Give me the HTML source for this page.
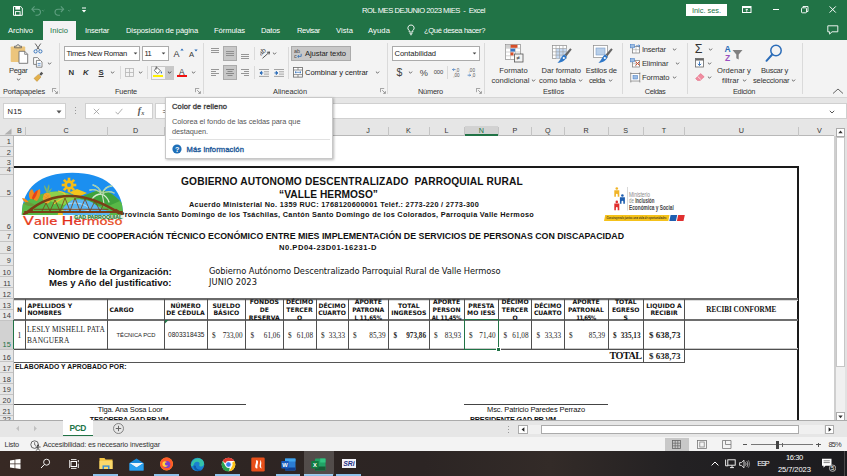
<!DOCTYPE html><html lang="es"><head><meta charset="utf-8"><title>ROL MES DEJUNIO 2023 MIES - Excel</title>
<style>html,body{margin:0;padding:0;width:847px;height:476px;overflow:hidden}body{position:relative;background:#fff;font-family:"Liberation Sans",sans-serif}#root{left:0;top:0;width:847px;height:476px;overflow:hidden;background:#fff}div,svg,span{position:absolute;box-sizing:border-box}span{white-space:pre;line-height:1;display:block}i{display:inline-block;width:0;height:0}</style></head><body><div id="root">
<div style="left:0px;top:0px;width:847px;height:39.5px;background:#217346;"></div>
<div style="left:0px;top:39.5px;width:847px;height:58.5px;background:#f3f3f3;"></div>
<div style="left:0px;top:97px;width:847px;height:1px;background:#d5d5d5;"></div>
<div style="left:0px;top:98px;width:847px;height:38px;background:#e6e6e6;"></div>
<svg style="left:13px;top:6px;" width="10" height="10" viewBox="0 0 10 10"><path d="M0.5 0.5h7.2l1.600 1.600v7.200h-8.800z" fill="none" stroke="#fff" stroke-width="1"/><rect x="2.300" y="0.8" width="4.800" height="2.800" fill="#fff"/><rect x="2.500" y="5.600" width="4.600" height="3.700" fill="none" stroke="#fff" stroke-width="0.900"/></svg>
<svg style="left:31px;top:5px;" width="14" height="11" viewBox="0 0 14 11"><path d="M1 4.2h5.5a3 3 0 0 1 0 6h-2" fill="none" stroke="#5f9f80" stroke-width="1.1"/><path d="M3.6 1.4L0.9 4.2l2.7 2.8" fill="none" stroke="#5f9f80" stroke-width="1.1"/><path d="M11 5l1.2 1.2L13.4 5" fill="none" stroke="#5f9f80" stroke-width="0.7"/></svg>
<svg style="left:54px;top:5px;" width="18" height="11" viewBox="0 0 18 11"><path d="M9.5 4.2h-5.5a3 3 0 0 0 0 6h2" fill="none" stroke="#5f9f80" stroke-width="1.1"/><path d="M6.9 1.4l2.7 2.8-2.7 2.8" fill="none" stroke="#5f9f80" stroke-width="1.1"/><path d="M14 5l1.2 1.2L16.4 5" fill="none" stroke="#5f9f80" stroke-width="0.7"/></svg>
<svg style="left:81px;top:7px;" width="6" height="7" viewBox="0 0 6 7"><rect x="1" y="0.5" width="4" height="1" fill="#fff"/><path d="M0.8 3h4.4L3 5.6z" fill="#fff"/></svg>
<div style="left:686px;top:4px;width:41px;height:12px;background:#fff;"></div>
<svg style="left:742px;top:6px;" width="10" height="8" viewBox="0 0 10 8"><rect x="0.5" y="0.5" width="8.5" height="6" fill="none" stroke="#fff" stroke-width="1"/><rect x="0.5" y="0.5" width="8.5" height="1.600" fill="#fff"/><path d="M4.750 3v2.800M3.500 4.200l1.250-1.250 1.250 1.250" fill="none" stroke="#fff" stroke-width="0.900"/></svg>
<div style="left:772.5px;top:8.8px;width:6.5px;height:1px;background:#fff;"></div>
<svg style="left:800.5px;top:6px;" width="8" height="8" viewBox="0 0 8 8"><rect x="0.5" y="1.800" width="5" height="5" rx="0.800" fill="none" stroke="#fff" stroke-width="0.900"/><path d="M2 1.800v-1.300h5v5h-1.300" fill="none" stroke="#fff" stroke-width="0.900"/></svg>
<svg style="left:829px;top:6px;" width="8" height="7" viewBox="0 0 8 7"><path d="M0.600 0.400l6.200 6.200M6.800 0.400l-6.200 6.200" stroke="#fff" stroke-width="1" fill="none"/></svg>
<div style="left:43px;top:21px;width:33px;height:19px;background:#f3f3f3;"></div>
<svg style="left:406.3px;top:24.3px;" width="10" height="13" viewBox="0 0 10 13"><path d="M5 1a3 3 0 0 0-1.800 5.500v1.500h3.600V6.500a3 3 0 0 0-1.800-5.500z" fill="none" stroke="#fff" stroke-width="0.9"/><path d="M3.500 9.400h3M4 10.700h2" stroke="#fff" stroke-width="0.8"/></svg>
<svg style="left:826.5px;top:24.5px;" width="12" height="10" viewBox="0 0 12 10"><path d="M0.800 0.800h10v6h-5.800l-2.400 2.300v-2.300h-1.800z" fill="none" stroke="#fff" stroke-width="0.900"/></svg>
<svg style="left:9px;top:43px;" width="20" height="22" viewBox="0 0 20 22"><rect x="1.700" y="3.500" width="14.500" height="15.500" rx="0.800" fill="#ecc57c"/><path d="M5.500 4.800v-1.600h2a1.500 1.500 0 0 1 3 0h2v1.600z" fill="none" stroke="#6a6a6a" stroke-width="0.900"/><path d="M10 8.300h5.700l3 3v9h-8.700z" fill="#fff" stroke="#707070" stroke-width="0.900"/><path d="M15.700 8.300v3h3" fill="none" stroke="#707070" stroke-width="0.800"/></svg>
<svg style="left:15.5px;top:78.0px;" width="5" height="3" viewBox="0 0 5 3"><path d="M0.900 0.600L2.500 2.200 4.100 0.600" fill="none" stroke="#666" stroke-width="1"/></svg>
<svg style="left:33px;top:43px;" width="10" height="11" viewBox="0 0 10 11"><path d="M2.2 0.5l4.2 6.2M7.8 0.5L3.6 6.7" stroke="#555" stroke-width="0.9" fill="none"/><circle cx="2.6" cy="8.4" r="1.6" fill="none" stroke="#2b6cb8" stroke-width="0.9"/><circle cx="7.4" cy="8.4" r="1.6" fill="none" stroke="#2b6cb8" stroke-width="0.9"/></svg>
<svg style="left:33px;top:57px;" width="10" height="11" viewBox="0 0 10 11"><path d="M0.6 0.6h4l1.6 1.6v5.2h-5.6z" fill="#fff" stroke="#6a6a6a" stroke-width="0.8"/><path d="M3.4 3.4h4l1.6 1.6v5.2h-5.6z" fill="#fff" stroke="#6a6a6a" stroke-width="0.8"/><path d="M4.6 6.4h3M4.6 8.2h3" stroke="#2b6cb8" stroke-width="0.7"/></svg>
<svg style="left:46.5px;top:61.5px;" width="5" height="3" viewBox="0 0 5 3"><path d="M0.900 0.600L2.500 2.200 4.100 0.600" fill="none" stroke="#666" stroke-width="1"/></svg>
<svg style="left:33px;top:71px;" width="11" height="11" viewBox="0 0 11 11"><path d="M6.2 3.2l2.2-2.4 1.8 1.6-2.2 2.4z" fill="#555"/><path d="M1 7.4l4.4-4 2.6 2.6-4 4.4z" fill="#e3b04b" stroke="#b8862b" stroke-width="0.5"/></svg>
<svg style="left:51.5px;top:88px;" width="6" height="6" viewBox="0 0 6 6"><path d="M0.4 4.2V0.4h3.8" fill="none" stroke="#777" stroke-width="0.7"/><path d="M2.2 2.2l3 3M5.4 3.2v2.2h-2.2" fill="none" stroke="#777" stroke-width="0.7"/></svg>
<div style="left:59px;top:43px;width:1px;height:51px;background:#dadada;"></div>
<div style="left:64px;top:46px;width:76px;height:15px;background:#fff;border:1px solid #ababab;"></div>
<svg style="left:132.5px;top:52.3px;" width="5" height="3" viewBox="0 0 5 3"><path d="M0.700 0.400h3.600L2.500 2.400z" fill="#444"/></svg>
<div style="left:142px;top:46px;width:26.5px;height:15px;background:#fff;border:1px solid #ababab;"></div>
<svg style="left:161.0px;top:52.3px;" width="5" height="3" viewBox="0 0 5 3"><path d="M0.700 0.400h3.600L2.500 2.400z" fill="#444"/></svg>
<svg style="left:179.5px;top:48px;" width="4" height="3" viewBox="0 0 4 3"><path d="M0.3 2.6L2 0.5l1.7 2.1z" fill="#2b6cb8"/></svg>
<svg style="left:194px;top:48.5px;" width="4" height="3" viewBox="0 0 4 3"><path d="M0.3 0.4L2 2.5l1.7-2.1z" fill="#2b6cb8"/></svg>
<svg style="left:109.5px;top:71.0px;" width="5" height="3" viewBox="0 0 5 3"><path d="M0.900 0.600L2.500 2.200 4.100 0.600" fill="none" stroke="#666" stroke-width="1"/></svg>
<div style="left:120px;top:66px;width:1px;height:13px;background:#dadada;"></div>
<svg style="left:125.2px;top:68px;" width="9" height="9" viewBox="0 0 9 9"><rect x="0.5" y="0.5" width="8" height="8" fill="none" stroke="#b5b5b5" stroke-width="0.8"/><path d="M4.5 0.5v8M0.5 4.5h8" stroke="#b5b5b5" stroke-width="0.8"/></svg>
<svg style="left:138.0px;top:71.0px;" width="5" height="3" viewBox="0 0 5 3"><path d="M0.900 0.600L2.500 2.200 4.100 0.600" fill="none" stroke="#666" stroke-width="1"/></svg>
<div style="left:147px;top:66px;width:1px;height:13px;background:#dadada;"></div>
<div style="left:151px;top:65.5px;width:23px;height:14.5px;background:#f3f3f3;border:1px solid #c6c6c6;"></div>
<div style="left:165px;top:65.5px;width:9px;height:14.5px;background:#c8c8c8;"></div>
<svg style="left:153px;top:66px;" width="10" height="9" viewBox="0 0 10 9"><path d="M3.6 1.2l4 3.6-3 2.8-3.2-3z" fill="#fff" stroke="#555" stroke-width="0.8"/><path d="M3.2 0.4v3" stroke="#555" stroke-width="0.8"/><path d="M8.4 5.2c0.8 1.2 0.9 2 0 2.2-0.9-0.2-0.8-1 0-2.2z" fill="#2b6cb8"/></svg>
<div style="left:153px;top:75px;width:10px;height:2px;background:#fff000;"></div>
<svg style="left:167.0px;top:71.0px;" width="5" height="3" viewBox="0 0 5 3"><path d="M0.900 0.600L2.500 2.200 4.100 0.600" fill="none" stroke="#444" stroke-width="1"/></svg>
<div style="left:177px;top:75px;width:10px;height:2px;background:#f01010;"></div>
<svg style="left:190.5px;top:71.0px;" width="5" height="3" viewBox="0 0 5 3"><path d="M0.900 0.600L2.500 2.200 4.100 0.600" fill="none" stroke="#666" stroke-width="1"/></svg>
<svg style="left:195px;top:88px;" width="6" height="6" viewBox="0 0 6 6"><path d="M0.4 4.2V0.4h3.8" fill="none" stroke="#777" stroke-width="0.7"/><path d="M2.2 2.2l3 3M5.4 3.2v2.2h-2.2" fill="none" stroke="#777" stroke-width="0.7"/></svg>
<div style="left:203px;top:43px;width:1px;height:51px;background:#dadada;"></div>
<div style="left:223px;top:46px;width:14px;height:15px;background:#c8c8c8;border:1px solid #ababab;"></div>
<div style="left:223px;top:65px;width:14px;height:15px;background:#c8c8c8;border:1px solid #ababab;"></div>
<svg style="left:211px;top:48px;" width="8" height="6" viewBox="0 0 8 6"><rect x="0" y="0" width="8" height="0.9" fill="#8c8c8c"/><rect x="0" y="2" width="8" height="0.9" fill="#8c8c8c"/><rect x="0" y="4" width="8" height="0.9" fill="#8c8c8c"/></svg>
<svg style="left:226px;top:50.5px;" width="8" height="6" viewBox="0 0 8 6"><rect x="0" y="0" width="8" height="0.9" fill="#8a8a8a"/><rect x="0" y="2" width="8" height="0.9" fill="#8a8a8a"/><rect x="0" y="4" width="8" height="0.9" fill="#8a8a8a"/></svg>
<svg style="left:241px;top:53.5px;" width="8" height="6" viewBox="0 0 8 6"><rect x="0" y="0" width="8" height="0.9" fill="#8c8c8c"/><rect x="0" y="2" width="8" height="0.9" fill="#8c8c8c"/><rect x="0" y="4" width="8" height="0.9" fill="#8c8c8c"/></svg>
<div style="left:254px;top:47px;width:1px;height:13px;background:#dadada;"></div>
<svg style="left:259.5px;top:47.5px;" width="11" height="11" viewBox="0 0 11 11"><text x="0" y="6" font-size="6.800" font-family="Liberation Sans" fill="#444" transform="rotate(-40 3 6)">ab</text><path d="M2.500 10.300l7-6.300M9.500 4l-2.600 0.300M9.500 4l-0.500 2.500" stroke="#444" stroke-width="0.900" fill="none"/></svg>
<svg style="left:271.5px;top:52.0px;" width="5" height="3" viewBox="0 0 5 3"><path d="M0.900 0.600L2.500 2.200 4.100 0.600" fill="none" stroke="#666" stroke-width="1"/></svg>
<div style="left:288px;top:47px;width:1px;height:32px;background:#dadada;"></div>
<div style="left:291px;top:46px;width:59.7px;height:15px;background:#c8c8c8;border:1px solid #ababab;"></div>
<svg style="left:294px;top:48px;" width="9" height="11" viewBox="0 0 9 11"><text x="0" y="4.8" font-size="5.4" font-family="Liberation Sans" fill="#444">ab</text><text x="0" y="10" font-size="5.4" font-family="Liberation Sans" fill="#444">c</text><path d="M4 8.4h3.2v-2.6" stroke="#2b6cb8" stroke-width="0.8" fill="none"/><path d="M5 7.2L3.6 8.4 5 9.6" stroke="#2b6cb8" stroke-width="0.8" fill="none"/></svg>
<svg style="left:211px;top:69px;" width="8" height="8" viewBox="0 0 8 8"><rect x="0" y="0" width="8" height="0.9" fill="#8c8c8c"/><rect x="0" y="2" width="5" height="0.9" fill="#8c8c8c"/><rect x="0" y="4" width="8" height="0.9" fill="#8c8c8c"/><rect x="0" y="6" width="5" height="0.9" fill="#8c8c8c"/></svg>
<svg style="left:226px;top:69px;" width="8" height="8" viewBox="0 0 8 8"><rect x="0.0" y="0" width="8" height="0.9" fill="#808080"/><rect x="1.5" y="2" width="5" height="0.9" fill="#808080"/><rect x="0.0" y="4" width="8" height="0.9" fill="#808080"/><rect x="1.5" y="6" width="5" height="0.9" fill="#808080"/></svg>
<svg style="left:241px;top:69px;" width="8" height="8" viewBox="0 0 8 8"><rect x="0" y="0" width="8" height="0.9" fill="#8c8c8c"/><rect x="3" y="2" width="5" height="0.9" fill="#8c8c8c"/><rect x="0" y="4" width="8" height="0.9" fill="#8c8c8c"/><rect x="3" y="6" width="5" height="0.9" fill="#8c8c8c"/></svg>
<div style="left:254px;top:66px;width:1px;height:13px;background:#dadada;"></div>
<svg style="left:259px;top:68.5px;" width="10" height="9" viewBox="0 0 10 9"><path d="M0 0.5h10M5 2.8h5M5 5.1h5M0 7.4h10" stroke="#9a9a9a" stroke-width="0.9"/><path d="M4.200 3.950H1M2.600 2.300L0.900 3.950l1.700 1.650z" stroke="#2b6cb8" stroke-width="0.900" fill="#2b6cb8"/></svg>
<svg style="left:274px;top:68.5px;" width="10" height="9" viewBox="0 0 10 9"><path d="M0 0.5h10M5 2.8h5M5 5.1h5M0 7.4h10" stroke="#9a9a9a" stroke-width="0.9"/><path d="M0.400 3.950h3M2.200 2.300L3.900 3.950 2.200 5.600z" stroke="#2b6cb8" stroke-width="0.900" fill="#2b6cb8"/></svg>
<svg style="left:293px;top:67px;" width="10" height="11" viewBox="0 0 10 11"><rect x="0.5" y="0.5" width="9" height="9.6" fill="#fff" stroke="#666" stroke-width="0.8"/><path d="M0.5 3h9M0.5 7.6h9M5 0.5v2.5M5 7.6v2.5" stroke="#666" stroke-width="0.7"/><path d="M2 5.3h6M3.2 4.2L2 5.3l1.2 1.1M6.8 4.2L8 5.3 6.800 6.400" stroke="#2b6cb8" stroke-width="0.7" fill="none"/></svg>
<svg style="left:374.5px;top:71.0px;" width="5" height="3" viewBox="0 0 5 3"><path d="M0.900 0.600L2.500 2.200 4.100 0.600" fill="none" stroke="#666" stroke-width="1"/></svg>
<svg style="left:380px;top:88px;" width="6" height="6" viewBox="0 0 6 6"><path d="M0.4 4.2V0.4h3.8" fill="none" stroke="#777" stroke-width="0.7"/><path d="M2.2 2.2l3 3M5.4 3.2v2.2h-2.2" fill="none" stroke="#777" stroke-width="0.7"/></svg>
<div style="left:387px;top:43px;width:1px;height:51px;background:#dadada;"></div>
<div style="left:392px;top:46px;width:88px;height:15px;background:#fff;border:1px solid #ababab;"></div>
<svg style="left:471.5px;top:52.3px;" width="5" height="3" viewBox="0 0 5 3"><path d="M0.700 0.400h3.600L2.500 2.400z" fill="#444"/></svg>
<svg style="left:408.0px;top:71.0px;" width="5" height="3" viewBox="0 0 5 3"><path d="M0.900 0.600L2.500 2.200 4.100 0.600" fill="none" stroke="#666" stroke-width="1"/></svg>
<div style="left:447px;top:66px;width:1px;height:13px;background:#dadada;"></div>
<svg style="left:452px;top:67px;" width="11" height="11" viewBox="0 0 11 11"><text x="3.4" y="4.6" font-size="4.6" font-family="Liberation Sans" fill="#555">,0</text><text x="1.2" y="10" font-size="4.6" font-family="Liberation Sans" fill="#555">,00</text><path d="M3.6 2.6H0.6M1.8 1.4L0.6 2.6l1.2 1.200" stroke="#2b6cb8" stroke-width="0.7" fill="none"/></svg>
<svg style="left:467px;top:67px;" width="11" height="11" viewBox="0 0 11 11"><text x="1.6" y="4.6" font-size="4.6" font-family="Liberation Sans" fill="#555">,00</text><text x="4.6" y="10" font-size="4.6" font-family="Liberation Sans" fill="#555">,0</text><path d="M0.6 8.2h3M2.4 7l1.200 1.200-1.200 1.200" stroke="#2b6cb8" stroke-width="0.7" fill="none"/></svg>
<svg style="left:476px;top:88px;" width="6" height="6" viewBox="0 0 6 6"><path d="M0.4 4.2V0.4h3.8" fill="none" stroke="#777" stroke-width="0.7"/><path d="M2.2 2.2l3 3M5.4 3.2v2.2h-2.2" fill="none" stroke="#777" stroke-width="0.7"/></svg>
<div style="left:484px;top:43px;width:1px;height:51px;background:#dadada;"></div>
<svg style="left:505px;top:44px;" width="19" height="19" viewBox="0 0 19 19"><rect x="0.5" y="0.5" width="15" height="15" fill="#fff" stroke="#8a8a8a" stroke-width="0.7"/><path d="M5.5 0.5v15M10.5 0.5v15M0.5 4.2h15M0.5 8h15M0.5 11.800h15" stroke="#b5b5b5" stroke-width="0.6"/><rect x="5.5" y="0.8" width="7" height="3" fill="#d64f2a"/><rect x="5.5" y="4.600" width="4.500" height="3" fill="#3a76c4"/><rect x="5.5" y="8.4" width="3" height="3" fill="#d64f2a"/><rect x="0.8" y="0.8" width="4.400" height="3.100" fill="#d0d0d0"/><rect x="9.500" y="10" width="8.500" height="8" fill="#f3f3f3" stroke="#555" stroke-width="0.8"/><text x="11.400" y="16.400" font-size="6.500" font-family="Liberation Sans" fill="#333">≠</text></svg>
<svg style="left:530.5px;top:79.0px;" width="5" height="3" viewBox="0 0 5 3"><path d="M0.900 0.600L2.500 2.200 4.100 0.600" fill="none" stroke="#666" stroke-width="1"/></svg>
<svg style="left:552px;top:45px;" width="20" height="19" viewBox="0 0 20 19"><rect x="0.5" y="0.5" width="14" height="13" fill="#fff" stroke="#8a8a8a" stroke-width="0.7"/><rect x="4" y="3.500" width="10.500" height="10" fill="#c5d9f1"/><path d="M4 0.5v13M7.500 0.5v13M11 0.5v13M0.5 3.500h14M0.5 6.800h14M0.5 10.100h14" stroke="#9a9a9a" stroke-width="0.6"/><path d="M18.200 3.200l1.500 1.300-5.200 6.800-2-1.600z" fill="#666"/><path d="M12.300 9.500l2.300 1.900c-0.600 3.600-4.600 6-9.200 6.400 2.800-1.800 3.600-6.400 6.900-8.300z" fill="#2f78c8"/><circle cx="11.800" cy="13" r="1.100" fill="#fff"/></svg>
<svg style="left:577.9px;top:79.0px;" width="5" height="3" viewBox="0 0 5 3"><path d="M0.900 0.600L2.500 2.200 4.100 0.600" fill="none" stroke="#666" stroke-width="1"/></svg>
<svg style="left:593px;top:45px;" width="20" height="19" viewBox="0 0 20 19"><rect x="0.5" y="0.5" width="14" height="12" fill="#fff" stroke="#8a8a8a" stroke-width="0.7"/><rect x="3" y="3" width="9" height="7" fill="#b8cfe9" stroke="#7b9cc5" stroke-width="0.600"/><path d="M18.200 3.200l1.500 1.300-5.200 6.800-2-1.600z" fill="#666"/><path d="M12.300 9.500l2.300 1.900c-0.600 3.600-4.600 6-9.200 6.400 2.800-1.800 3.600-6.400 6.900-8.300z" fill="#2f78c8"/><circle cx="11.800" cy="13" r="1.100" fill="#fff"/></svg>
<svg style="left:608.3px;top:79.0px;" width="5" height="3" viewBox="0 0 5 3"><path d="M0.900 0.600L2.500 2.200 4.100 0.600" fill="none" stroke="#666" stroke-width="1"/></svg>
<div style="left:622px;top:43px;width:1px;height:51px;background:#dadada;"></div>
<svg style="left:629.5px;top:43.5px;" width="11" height="11" viewBox="0 0 11 11"><rect x="2.500" y="2.500" width="7" height="6.500" fill="#fff" stroke="#777" stroke-width="0.7"/><path d="M2.500 5.700h7M6 2.500v6.500" stroke="#999" stroke-width="0.5"/><rect x="0.3" y="0.5" width="4.200" height="3.400" fill="#9dbde3" stroke="#3a76c4" stroke-width="0.500"/><path d="M6 1.800h4M8.500 0.600L10 1.800 8.500 3" stroke="#3a76c4" stroke-width="0.7" fill="none"/></svg>
<svg style="left:671.9px;top:47.5px;" width="5" height="3" viewBox="0 0 5 3"><path d="M0.900 0.600L2.500 2.200 4.100 0.600" fill="none" stroke="#666" stroke-width="1"/></svg>
<svg style="left:629.5px;top:57.5px;" width="11" height="11" viewBox="0 0 11 11"><rect x="2.500" y="2.500" width="7" height="6.500" fill="#fff" stroke="#777" stroke-width="0.7"/><path d="M2.500 5.700h7M6 2.500v6.500" stroke="#999" stroke-width="0.5"/><rect x="0.3" y="0.5" width="4.200" height="3.400" fill="#9dbde3" stroke="#3a76c4" stroke-width="0.500"/><path d="M5.500 3.500l4 4M9.500 3.500l-4 4" stroke="#d64f2a" stroke-width="1"/></svg>
<svg style="left:674.7px;top:61.8px;" width="5" height="3" viewBox="0 0 5 3"><path d="M0.900 0.600L2.500 2.200 4.100 0.600" fill="none" stroke="#666" stroke-width="1"/></svg>
<svg style="left:629.5px;top:71.5px;" width="11" height="11" viewBox="0 0 11 11"><rect x="0.8" y="1.500" width="9" height="7.500" fill="#fff" stroke="#777" stroke-width="0.7"/><rect x="3" y="3.500" width="4.600" height="3.500" fill="#9dbde3" stroke="#3a76c4" stroke-width="0.500"/><path d="M0.8 0.4v1.500M9.800 0.400v1.500M0.800 9v1.500M9.800 9v1.500" stroke="#777" stroke-width="0.7"/></svg>
<svg style="left:671.7px;top:76.0px;" width="5" height="3" viewBox="0 0 5 3"><path d="M0.900 0.600L2.500 2.200 4.100 0.600" fill="none" stroke="#666" stroke-width="1"/></svg>
<div style="left:687px;top:43px;width:1px;height:51px;background:#dadada;"></div>
<svg style="left:708.2px;top:47.5px;" width="5" height="3" viewBox="0 0 5 3"><path d="M0.900 0.600L2.500 2.200 4.100 0.600" fill="none" stroke="#666" stroke-width="1"/></svg>
<svg style="left:695px;top:58px;" width="9" height="10" viewBox="0 0 9 10"><rect x="0.5" y="0.5" width="8" height="8.500" fill="#fff" stroke="#666" stroke-width="0.8"/><rect x="0.5" y="0.5" width="8" height="2" fill="#666"/><path d="M4.500 3.500v4M2.800 5.800l1.700 1.700 1.700-1.700" stroke="#2b6cb8" stroke-width="0.9" fill="none"/></svg>
<svg style="left:707.0px;top:61.8px;" width="5" height="3" viewBox="0 0 5 3"><path d="M0.900 0.600L2.500 2.200 4.100 0.600" fill="none" stroke="#666" stroke-width="1"/></svg>
<svg style="left:695px;top:73px;" width="10" height="8" viewBox="0 0 10 8"><path d="M5.600 0.600l3.600 3.200-4 3.600H2.400L0.600 5.600z" fill="#f08ca0" stroke="#e0607a" stroke-width="0.500"/><path d="M2.600 3.400l3.200 3" stroke="#fff" stroke-width="0.700"/></svg>
<svg style="left:707.0px;top:76.0px;" width="5" height="3" viewBox="0 0 5 3"><path d="M0.900 0.600L2.500 2.200 4.100 0.600" fill="none" stroke="#666" stroke-width="1"/></svg>
<svg style="left:723.8px;top:43.5px;" width="20" height="19" viewBox="0 0 20 19"><text x="0.500" y="7.500" font-size="8.500" font-weight="700" font-family="Liberation Sans" fill="#2b6cb8">A</text><text x="1" y="17" font-size="8.500" font-weight="700" font-family="Liberation Sans" fill="#9a4fc0">Z</text><path d="M8.500 6h10l-3.800 4.500v5l-2.400-1.300v-3.700z" fill="#808080"/></svg>
<svg style="left:742.0px;top:79.0px;" width="5" height="3" viewBox="0 0 5 3"><path d="M0.900 0.600L2.500 2.200 4.100 0.600" fill="none" stroke="#666" stroke-width="1"/></svg>
<svg style="left:764px;top:44px;" width="20" height="19" viewBox="0 0 20 19"><circle cx="12" cy="6.500" r="5.200" fill="none" stroke="#2b6cb8" stroke-width="1.500"/><path d="M8.200 10.500L2.500 16.800" stroke="#2b6cb8" stroke-width="2" stroke-linecap="round"/></svg>
<svg style="left:791.2px;top:79.0px;" width="5" height="3" viewBox="0 0 5 3"><path d="M0.900 0.600L2.500 2.200 4.100 0.600" fill="none" stroke="#666" stroke-width="1"/></svg>
<div style="left:802px;top:43px;width:1px;height:51px;background:#dadada;"></div>
<svg style="left:831.5px;top:88px;" width="12" height="7" viewBox="0 0 12 7"><path d="M1 5.500l5-4.500 5 4.500" stroke="#555" stroke-width="0.900" fill="none"/></svg>
<div style="left:3px;top:103px;width:63px;height:16px;background:#fff;border:1px solid #d0d0d0;"></div>
<svg style="left:56px;top:109.5px;" width="6" height="4" viewBox="0 0 6 4"><path d="M0.500 0.500h5L3 3.500z" fill="#555"/></svg>
<div style="left:75px;top:107px;width:1px;height:1px;background:#999;"></div>
<div style="left:75px;top:110px;width:1px;height:1px;background:#999;"></div>
<div style="left:75px;top:113px;width:1px;height:1px;background:#999;"></div>
<div style="left:85px;top:103px;width:68px;height:16px;background:#fff;border:1px solid #d0d0d0;"></div>
<svg style="left:93px;top:108px;" width="7" height="7" viewBox="0 0 7 7"><path d="M0.800 0.800l5.400 5.400M6.200 0.800L0.800 6.200" stroke="#9a9a9a" stroke-width="0.800" fill="none"/></svg>
<svg style="left:115px;top:108px;" width="8" height="7" viewBox="0 0 8 7"><path d="M0.600 3.800l2.200 2.400L7.400 0.800" stroke="#9a9a9a" stroke-width="0.800" fill="none"/></svg>
<div style="left:155px;top:103px;width:686px;height:16px;background:#fff;border:1px solid #d0d0d0;border-right:none;"></div>
<div style="left:833px;top:103px;width:14px;height:16px;background:#fff;border:1px solid #d0d0d0;border-left:none;"></div>
<svg style="left:829px;top:109.5px;" width="6" height="4" viewBox="0 0 6 4"><path d="M0.800 0.800L3 3l2.200-2.200" fill="none" stroke="#444" stroke-width="0.9"/></svg>
<div style="left:0px;top:126px;width:834px;height:10px;background:#e6e6e6;"></div>
<div style="left:0px;top:135px;width:834px;height:1px;background:#b8b8b8;"></div>
<div style="left:0px;top:136px;width:14px;height:284px;background:#e6e6e6;"></div>
<div style="left:14px;top:136px;width:820px;height:284px;background:#fff;"></div>
<div style="left:13px;top:136px;width:1px;height:284px;background:#b8b8b8;"></div>
<svg style="left:4px;top:128px;" width="8" height="7" viewBox="0 0 8 7"><path d="M7.500 0.500v6h-7z" fill="#b0b0b0"/></svg>
<div style="left:465.3px;top:126px;width:32.5px;height:10px;background:#d2d2d2;"></div>
<div style="left:465.3px;top:134.3px;width:32.5px;height:1.5px;background:#217346;"></div>
<div style="left:24.5px;top:127px;width:1px;height:9px;background:#c4c4c4;"></div>
<div style="left:106.5px;top:127px;width:1px;height:9px;background:#c4c4c4;"></div>
<div style="left:163.5px;top:127px;width:1px;height:9px;background:#c4c4c4;"></div>
<div style="left:387.5px;top:127px;width:1px;height:9px;background:#c4c4c4;"></div>
<div style="left:428.5px;top:127px;width:1px;height:9px;background:#c4c4c4;"></div>
<div style="left:463.5px;top:127px;width:1px;height:9px;background:#c4c4c4;"></div>
<div style="left:498.0px;top:127px;width:1px;height:9px;background:#c4c4c4;"></div>
<div style="left:531.0px;top:127px;width:1px;height:9px;background:#c4c4c4;"></div>
<div style="left:563.5px;top:127px;width:1px;height:9px;background:#c4c4c4;"></div>
<div style="left:607.5px;top:127px;width:1px;height:9px;background:#c4c4c4;"></div>
<div style="left:643.0px;top:127px;width:1px;height:9px;background:#c4c4c4;"></div>
<div style="left:684.0px;top:127px;width:1px;height:9px;background:#c4c4c4;"></div>
<div style="left:797.5px;top:127px;width:1px;height:9px;background:#c4c4c4;"></div>
<div style="left:840.3px;top:127px;width:1px;height:9px;background:#c4c4c4;"></div>
<div style="left:0px;top:320px;width:13px;height:29.2px;background:#d2d2d2;"></div>
<div style="left:12.8px;top:320px;width:1.4px;height:29.2px;background:#217346;"></div>
<div style="left:0px;top:145.5px;width:13px;height:1px;background:#c4c4c4;"></div>
<div style="left:0px;top:156.0px;width:13px;height:1px;background:#c4c4c4;"></div>
<div style="left:0px;top:166.5px;width:13px;height:1px;background:#c4c4c4;"></div>
<div style="left:0px;top:173.5px;width:13px;height:1px;background:#c4c4c4;"></div>
<div style="left:0px;top:196.0px;width:13px;height:1px;background:#c4c4c4;"></div>
<div style="left:0px;top:230.0px;width:13px;height:1px;background:#c4c4c4;"></div>
<div style="left:0px;top:240.7px;width:13px;height:1px;background:#c4c4c4;"></div>
<div style="left:0px;top:252.5px;width:13px;height:1px;background:#c4c4c4;"></div>
<div style="left:0px;top:264.5px;width:13px;height:1px;background:#c4c4c4;"></div>
<div style="left:0px;top:275.9px;width:13px;height:1px;background:#c4c4c4;"></div>
<div style="left:0px;top:287.1px;width:13px;height:1px;background:#c4c4c4;"></div>
<div style="left:0px;top:298.1px;width:13px;height:1px;background:#c4c4c4;"></div>
<div style="left:0px;top:309.3px;width:13px;height:1px;background:#c4c4c4;"></div>
<div style="left:0px;top:319.5px;width:13px;height:1px;background:#c4c4c4;"></div>
<div style="left:0px;top:348.7px;width:13px;height:1px;background:#c4c4c4;"></div>
<div style="left:0px;top:361.2px;width:13px;height:1px;background:#c4c4c4;"></div>
<div style="left:0px;top:372.1px;width:13px;height:1px;background:#c4c4c4;"></div>
<div style="left:0px;top:383.0px;width:13px;height:1px;background:#c4c4c4;"></div>
<div style="left:0px;top:393.6px;width:13px;height:1px;background:#c4c4c4;"></div>
<div style="left:0px;top:404.1px;width:13px;height:1px;background:#c4c4c4;"></div>
<div style="left:0px;top:415.0px;width:13px;height:1px;background:#c4c4c4;"></div>
<div style="left:14px;top:166.3px;width:784.5px;height:1.5px;background:#1a1a1a;"></div>
<div style="left:797px;top:166px;width:1.5px;height:254.3px;background:#1a1a1a;"></div>
<div style="left:14px;top:298px;width:784px;height:2px;background:#6a6a6a;"></div>
<div style="left:14px;top:300px;width:784px;height:1px;background:#dcdcdc;"></div>
<div style="left:14px;top:362px;width:630px;height:1px;background:#555;"></div>
<div style="left:14px;top:404px;width:231.5px;height:1px;background:#444;"></div>
<div style="left:464px;top:404px;width:144px;height:1px;background:#444;"></div>
<div style="left:14px;top:319px;width:784px;height:2px;background:#6e6e6e;"></div>
<div style="left:14px;top:349px;width:784px;height:1px;background:#505050;"></div>
<div style="left:14px;top:348px;width:784px;height:1px;background:#c8c8c8;"></div>
<div style="left:643px;top:362px;width:42px;height:1px;background:#505050;"></div>
<div style="left:25px;top:299px;width:1px;height:50px;background:#505050;"></div>
<div style="left:107px;top:299px;width:1px;height:50px;background:#505050;"></div>
<div style="left:164px;top:299px;width:1px;height:50px;background:#505050;"></div>
<div style="left:207px;top:299px;width:1px;height:50px;background:#505050;"></div>
<div style="left:245px;top:299px;width:1px;height:50px;background:#505050;"></div>
<div style="left:283px;top:299px;width:1px;height:50px;background:#505050;"></div>
<div style="left:316px;top:299px;width:1px;height:50px;background:#505050;"></div>
<div style="left:348px;top:299px;width:1px;height:50px;background:#505050;"></div>
<div style="left:388px;top:299px;width:1px;height:50px;background:#505050;"></div>
<div style="left:429px;top:299px;width:1px;height:50px;background:#505050;"></div>
<div style="left:464px;top:299px;width:1px;height:50px;background:#505050;"></div>
<div style="left:498px;top:299px;width:1px;height:50px;background:#505050;"></div>
<div style="left:531px;top:299px;width:1px;height:50px;background:#505050;"></div>
<div style="left:564px;top:299px;width:1px;height:50px;background:#505050;"></div>
<div style="left:608px;top:299px;width:1px;height:50px;background:#505050;"></div>
<div style="left:643px;top:299px;width:1px;height:63px;background:#505050;"></div>
<div style="left:684px;top:299px;width:1px;height:63px;background:#505050;"></div>
<svg style="left:164.5px;top:320px;" width="4" height="4" viewBox="0 0 4 4"><path d="M0 0h3.500L0 3.500z" fill="#217346"/></svg>
<div style="left:463.5px;top:319px;width:35.5px;height:30.5px;border:1.300px solid #217346;"></div>
<div style="left:496px;top:347px;width:4.5px;height:4.5px;background:#fff;"></div>
<div style="left:496.8px;top:347.8px;width:3.2px;height:3.2px;background:#217346;"></div>
<div style="left:834px;top:126px;width:13px;height:294.3px;background:#f0f0f0;"></div>
<div style="left:834px;top:126px;width:13px;height:10px;background:#e6e6e6;"></div>
<div style="left:834px;top:136px;width:2px;height:284.3px;background:#cfcfcf;"></div>
<div style="left:845px;top:136px;width:2px;height:284.3px;background:#e2e2e2;"></div>
<div style="left:836px;top:127.5px;width:9px;height:9px;background:#fff;border:1px solid #ababab;"></div>
<svg style="left:838px;top:130px;" width="5" height="4" viewBox="0 0 5 4"><path d="M0.300 3.300L2.500 0.500l2.200 2.800z" fill="#333"/></svg>
<div style="left:836px;top:411.5px;width:9px;height:9px;background:#fff;border:1px solid #ababab;"></div>
<svg style="left:838px;top:414.5px;" width="5" height="4" viewBox="0 0 5 4"><path d="M0.300 0.500L2.500 3.300l2.200-2.800z" fill="#333"/></svg>
<div style="left:836px;top:137px;width:9px;height:230px;background:#fff;border:1px solid #c6c6c6;"></div>
<div style="left:0px;top:420px;width:847px;height:17px;background:#e6e6e6;"></div>
<div style="left:0px;top:420px;width:847px;height:1px;background:#ababab;"></div>
<svg style="left:15px;top:425px;" width="5" height="7" viewBox="0 0 5 7"><path d="M4 0.800L1.200 3.500 4 6.200z" fill="#c0c0c0"/></svg>
<svg style="left:33px;top:425px;" width="5" height="7" viewBox="0 0 5 7"><path d="M1 0.800L3.800 3.500 1 6.200z" fill="#c0c0c0"/></svg>
<div style="left:62.5px;top:420px;width:30.5px;height:15.5px;background:#fff;"></div>
<div style="left:62.5px;top:434.5px;width:30.5px;height:1.6px;background:#217346;"></div>
<svg style="left:111.8px;top:422px;" width="13" height="13" viewBox="0 0 13 13"><circle cx="6.500" cy="6.500" r="5" fill="none" stroke="#777" stroke-width="0.900"/><path d="M6.500 3.800v5.400M3.800 6.500h5.400" stroke="#666" stroke-width="1"/></svg>
<div style="left:507.5px;top:425.5px;width:1px;height:1px;background:#999;"></div>
<div style="left:507.5px;top:428.5px;width:1px;height:1px;background:#999;"></div>
<div style="left:507.5px;top:431.5px;width:1px;height:1px;background:#999;"></div>
<div style="left:518px;top:424.5px;width:9.5px;height:9.5px;background:#fff;border:1px solid #ababab;"></div>
<svg style="left:520.5px;top:427px;" width="4" height="5" viewBox="0 0 4 5"><path d="M3.400 0.300L0.600 2.500l2.800 2.200z" fill="#222"/></svg>
<div style="left:527.5px;top:424.5px;width:13px;height:9.5px;background:#f0f0f0;"></div>
<div style="left:540.5px;top:424.5px;width:258px;height:9.5px;background:#fff;border:1px solid #ababab;"></div>
<div style="left:798.5px;top:424.5px;width:25px;height:9.5px;background:#f0f0f0;"></div>
<div style="left:825px;top:424.5px;width:9px;height:9.5px;background:#fff;border:1px solid #ababab;"></div>
<svg style="left:827.5px;top:427px;" width="4" height="5" viewBox="0 0 4 5"><path d="M0.600 0.300L3.400 2.500 0.600 4.700z" fill="#222"/></svg>
<div style="left:0px;top:437px;width:847px;height:14.5px;background:#f3f3f3;"></div>
<svg style="left:30px;top:439.5px;" width="12" height="11" viewBox="0 0 12 11"><circle cx="4.600" cy="4.600" r="3.800" fill="none" stroke="#444" stroke-width="0.800"/><path d="M4.600 2.200v2.600l1.600 0.800" stroke="#444" stroke-width="0.700" fill="none"/><circle cx="8" cy="5.400" r="0.900" fill="#333"/><path d="M5.600 7h5M8 7v1.600M8 8.400l-1.800 2.200M8 8.400l1.800 2.200" stroke="#333" stroke-width="0.800" fill="none"/></svg>
<div style="left:665px;top:438px;width:23.5px;height:13.5px;background:#c8c8c8;"></div>
<svg style="left:671.5px;top:440px;" width="9" height="9" viewBox="0 0 9 9"><rect x="0.500" y="0.500" width="8" height="8" fill="none" stroke="#666" stroke-width="0.800"/><path d="M3.200 0.500v8M5.800 0.500v8M0.500 3.200h8M0.500 5.800h8" stroke="#666" stroke-width="0.700"/></svg>
<svg style="left:697px;top:440px;" width="10" height="9" viewBox="0 0 10 9"><rect x="0.500" y="0.500" width="9" height="8" fill="none" stroke="#777" stroke-width="0.800"/><rect x="2.800" y="2" width="4.400" height="5" fill="none" stroke="#777" stroke-width="0.700"/></svg>
<svg style="left:721.5px;top:440px;" width="10" height="9" viewBox="0 0 10 9"><path d="M0.500 8.500v-8h8.500v8z" fill="none" stroke="#777" stroke-width="0.800"/><path d="M3.500 0.500v4h5.500" fill="none" stroke="#777" stroke-width="0.800"/></svg>
<div style="left:743px;top:444.3px;width:4px;height:1px;background:#555;"></div>
<div style="left:750.5px;top:444.3px;width:62px;height:1px;background:#777;"></div>
<div style="left:776px;top:441px;width:2.6px;height:7.5px;background:#444;"></div>
<div style="left:781.5px;top:443px;width:1px;height:3.5px;background:#666;"></div>
<div style="left:816px;top:444.3px;width:4.6px;height:1px;background:#555;"></div>
<div style="left:817.8px;top:442.5px;width:1px;height:4.6px;background:#555;"></div>
<div style="left:0px;top:451px;width:847px;height:25px;background:linear-gradient(90deg,#372924 0%,#2e2523 30%,#2c2524 50%,#332b28 65%,#232123 80%,#1c1c1f 100%);"></div>
<svg style="left:10px;top:459px;" width="11" height="10" viewBox="0 0 11 10"><path d="M0 1.400l4.600-0.700v3.900H0zM5.300 0.600L10.500 0v4.600H5.300zM0 5.300h4.600v3.900L0 8.500zM5.300 5.300h5.200V10l-5.200-0.700z" fill="#fff"/></svg>
<svg style="left:40px;top:458px;" width="11" height="11" viewBox="0 0 11 11"><circle cx="6.600" cy="4.200" r="3" fill="none" stroke="#fff" stroke-width="0.900"/><path d="M4.400 6.500L1 10" stroke="#fff" stroke-width="1"/></svg>
<svg style="left:69px;top:458.5px;" width="11" height="10" viewBox="0 0 11 10"><rect x="2" y="2.500" width="5.500" height="5" fill="none" stroke="#fff" stroke-width="1"/><path d="M0.300 1v8M9.300 1v2.200M9.300 4.600v4.400M2 0.600h5.500M2 9.400h5.500" stroke="#fff" stroke-width="0.900"/></svg>
<div style="left:93px;top:474.3px;width:25px;height:1.7px;background:#8ec1ea;"></div>
<div style="left:154px;top:474.3px;width:25px;height:1.7px;background:#8ec1ea;"></div>
<div style="left:215px;top:474.3px;width:25px;height:1.7px;background:#8ec1ea;"></div>
<div style="left:276px;top:474.3px;width:24px;height:1.7px;background:#8ec1ea;"></div>
<div style="left:304px;top:474.3px;width:29px;height:1.7px;background:#8ec1ea;"></div>
<div style="left:336px;top:474.3px;width:25px;height:1.7px;background:#8ec1ea;"></div>
<div style="left:304px;top:451px;width:29.5px;height:23.5px;background:rgba(255,255,255,0.18);"></div>
<svg style="left:99px;top:457px;" width="14" height="13" viewBox="0 0 14 13"><path d="M0.500 1h5l1 1.500h7v9.500h-13z" fill="#f6c544"/><rect x="0.500" y="3.800" width="13" height="8.200" fill="#fbd96b"/><rect x="3.500" y="8.400" width="7" height="3.600" fill="#3a8fd6"/><rect x="5" y="9.800" width="4" height="2.200" fill="#fbd96b"/></svg>
<svg style="left:129px;top:457.5px;" width="15" height="13" viewBox="0 0 15 13"><path d="M0.500 5L7.500 0.500 14.500 5v7.500h-14z" fill="#1a8ad8"/><path d="M0.500 5l7 4.500 7-4.500" fill="#fff" opacity="0.920"/><path d="M0.500 5.200l7 4.500 7-4.500v7.300h-14z" fill="#2aa0ee"/></svg>
<svg style="left:159px;top:456px;" width="15" height="15" viewBox="0 0 15 15"><circle cx="7.500" cy="8" r="6.500" fill="#ff9a1e"/><path d="M2 5c1-2.500 4-4.200 7-3.400 3 0.800 5 3.600 4.800 6.800-0.300 3.400-3.200 6-6.600 5.800-3.600-0.200-6.400-3.200-6.100-6.900z" fill="#ff5a2a"/><circle cx="7.800" cy="8.400" r="3.500" fill="#7a3fd0"/><path d="M4 6c1.200-1 3-0.800 4 0.200-1.400-0.200-2.200 0.600-2 1.800 0.200 1.400 1.800 2 3 1.300-0.800 1.800-3.200 2.200-4.600 1-1.200-1-1.400-3-0.400-4.300z" fill="#ffd23e"/></svg>
<svg style="left:190px;top:456.5px;" width="15" height="15" viewBox="0 0 15 15"><circle cx="7.500" cy="7.500" r="6.800" fill="#1b7fd0"/><path d="M1 9c0-4.500 3-7.800 7-7.800 3.400 0 6 2.400 6 5.400 0 1.800-1.200 3-2.800 3-1.200 0-2-0.600-2-1.400 0-0.600 0.400-0.800 0.400-1.500 0-1-1-1.900-2.400-1.900-2.200 0-3.800 2-3.800 4.400z" fill="#35c3a8"/><path d="M3.400 8.600c0 3 2.200 5.400 5 5.400 1.600 0 3-0.500 4-1.500-3.600 1.200-6.600-0.800-6.600-3.800z" fill="#0d5cab"/></svg>
<svg style="left:220.5px;top:456.5px;" width="15" height="15" viewBox="0 0 15 15"><circle cx="7.500" cy="7.500" r="6.800" fill="#fff"/><path d="M7.500 0.700a6.800 6.800 0 0 1 5.900 3.400H7.500a3.400 3.400 0 0 0-3.200 2.200L1.700 3.900A6.800 6.800 0 0 1 7.500 0.700z" fill="#e33b2e"/><path d="M13.400 4.100a6.800 6.800 0 0 1-5.200 10.200l2.900-5.100a3.400 3.400 0 0 0 0-3.400z" fill="#fbc116" transform="translate(0,0)"/><path d="M8.200 14.300A6.800 6.800 0 0 1 1.700 3.900l2.900 5.300a3.400 3.400 0 0 0 4.100 1.500z" fill="#2ba24c"/><circle cx="7.500" cy="7.500" r="2.700" fill="#3b7ded" stroke="#fff" stroke-width="0.700"/></svg>
<svg style="left:251px;top:456.5px;" width="14" height="15" viewBox="0 0 14 15"><rect x="0.300" y="0.500" width="13.400" height="14" rx="1.200" fill="#e8501a"/><path d="M5 3.500c1.600-0.600 2.400 0.600 2 2.400-0.400 1.800-1 3.400-0.400 5.400-1.800 0.400-2.600-0.800-2.400-2.600 0.200-1.600 1.200-3 0.800-5.200zM9 3c1.200 0.800 1.600 2.400 1.200 4.200-0.300 1.500-0.200 3 0.600 4.200-1.600 0-2.400-1.200-2.200-2.800 0.200-1.800 1-3.600 0.400-5.600z" fill="#fff"/></svg>
<svg style="left:281px;top:457.5px;" width="15" height="13" viewBox="0 0 15 13"><rect x="4" y="0.500" width="10.500" height="12" rx="0.800" fill="#2b7cd3"/><rect x="4" y="0.500" width="10.500" height="3" fill="#41a5ee"/><rect x="4" y="9.500" width="10.500" height="3" fill="#103f91"/><rect x="0.300" y="3" width="7.400" height="7.400" rx="0.600" fill="#185abd"/><text x="1.300" y="9" font-size="5.800" font-weight="700" font-family="Liberation Sans" fill="#fff">W</text></svg>
<svg style="left:311px;top:457.5px;" width="15" height="13" viewBox="0 0 15 13"><rect x="4" y="0.500" width="10.500" height="12" rx="0.800" fill="#21a366"/><rect x="9.200" y="0.500" width="5.300" height="4" fill="#33c481"/><rect x="4" y="8.500" width="10.500" height="4" fill="#185c37"/><rect x="0.300" y="3" width="7.400" height="7.400" rx="0.600" fill="#107c41"/><text x="2" y="9" font-size="5.800" font-weight="700" font-family="Liberation Sans" fill="#fff">X</text></svg>
<svg style="left:342px;top:458.5px;" width="14" height="10" viewBox="0 0 14 10"><rect x="0" y="0" width="14" height="9" fill="#f2f2f8"/><text x="1.200" y="7.200" font-size="6.800" font-weight="700" font-style="italic" font-family="Liberation Sans" fill="#1c2f86" textLength="11.500" lengthAdjust="spacingAndGlyphs">SRi</text></svg>
<svg style="left:710.5px;top:460.5px;" width="8" height="5" viewBox="0 0 8 5"><path d="M0.600 4.400L4 1l3.400 3.400" stroke="#fff" stroke-width="1" fill="none"/></svg>
<svg style="left:724.5px;top:458.5px;" width="11" height="10" viewBox="0 0 11 10"><rect x="2.800" y="0.800" width="7.400" height="5.400" fill="none" stroke="#fff" stroke-width="0.900"/><path d="M0.600 0.600v6.200h2.600M5 8.600h4M7 6.400v2.200" stroke="#fff" stroke-width="0.900" fill="none"/></svg>
<svg style="left:739px;top:458.5px;" width="11" height="10" viewBox="0 0 11 10"><path d="M0.600 3.600h1.800L5 1.200v7.600L2.400 6.400H0.600z" fill="none" stroke="#fff" stroke-width="0.800"/><path d="M6.400 3.400c0.800 0.900 0.800 2.300 0 3.200M7.800 2.200c1.400 1.600 1.400 4 0 5.600" stroke="#fff" stroke-width="0.700" fill="none"/><path d="M9.200 1.200c1.800 2.200 1.800 5.400 0 7.600" stroke="#bbb" stroke-width="0.600" fill="none"/></svg>
<div style="left:843.5px;top:451px;width:1px;height:25px;background:#4a4a4a;"></div>
<svg style="left:820.5px;top:457.5px;" width="15" height="15" viewBox="0 0 15 15"><path d="M1 0.800h9.500v7h-6l-2 2v-2H1z" fill="#fff"/><path d="M2.600 2.800h6.200M2.600 4.600h6.200" stroke="#333" stroke-width="0.600"/><circle cx="11.600" cy="10.200" r="3.200" fill="#2a2a2a" stroke="#ddd" stroke-width="0.700"/><text x="10.100" y="12.300" font-size="5.600" font-family="Liberation Sans" fill="#fff">5</text></svg>
<svg style="left:20px;top:170px;z-index:3;" width="106" height="60" viewBox="0 0 106 60"><defs><clipPath id="dome"><path d="M1.800 45C1.800 17.500 20.500 2.800 52.400 2.800S103 17.500 103 45z"/></clipPath><linearGradient id="vh" x1="0" y1="0" x2="1" y2="0"><stop offset="0" stop-color="#e8401c"/><stop offset="0.500" stop-color="#e02a1a"/><stop offset="1" stop-color="#e8501c"/></linearGradient></defs><g clip-path="url(#dome)"><rect x="0" y="0" width="106" height="46" fill="#1b8ff0"/><path d="M0 46V36C8 30 18 24 30 22c8-1.500 14 0 20 2l10 4c8-4 16-8 24-7 8 1 14 8 22 16v9z" fill="#58b947"/><path d="M30 22c8-1.500 14 0 20 2l8 3-14 8-22-6z" fill="#8fd04a"/><path d="M60 28c8-4 16-8 24-7 6 1 11 5 16 10l-14 6-22-4z" fill="#3fa23c"/><path d="M49 22.500l8-3.500 10 4-9 4z" fill="#f4c51e"/><path d="M38 21c6 1 9 3 6 6s-8 4-10 7" fill="none" stroke="#f0c630" stroke-width="1.200"/><path d="M52 30c10-2 18 0 24 5 4 3 10 6 16 6l-4 5H44c-4-4-2-9 8-16z" fill="#58b6f4"/><path d="M48 34c6-2 14-1 20 3M46 40c8-2 20-1 30 3" stroke="#c9e8fb" stroke-width="0.800" fill="none"/><path d="M44 40c-2 2-2 4 0 6h-6c-1-3 1-5 6-6z" fill="#f0c630"/></g><g transform="translate(49,15)"><rect x="-1.300" y="-7.300" width="2.600" height="4" fill="#f6bd16" transform="rotate(0)"/><rect x="-1.300" y="-7.300" width="2.600" height="4" fill="#f6bd16" transform="rotate(45)"/><rect x="-1.300" y="-7.300" width="2.600" height="4" fill="#f6bd16" transform="rotate(90)"/><rect x="-1.300" y="-7.300" width="2.600" height="4" fill="#f6bd16" transform="rotate(135)"/><rect x="-1.300" y="-7.300" width="2.600" height="4" fill="#f6bd16" transform="rotate(180)"/><rect x="-1.300" y="-7.300" width="2.600" height="4" fill="#f6bd16" transform="rotate(225)"/><rect x="-1.300" y="-7.300" width="2.600" height="4" fill="#f6bd16" transform="rotate(270)"/><rect x="-1.300" y="-7.300" width="2.600" height="4" fill="#f6bd16" transform="rotate(315)"/><circle r="4.700" fill="#f6bd16"/><circle r="2" fill="#2b8fe8"/></g><path d="M10 29c-2-4-1-8 2-10 2 3 3 6 2 10zM14 30c0-5 2-9 6-11 1 4 0 8-3 12zM8 31c-2-2-4-3-6-3 1 3 3 5 7 6z" fill="#f08a1c"/><path d="M12 28c1-4 3-7 6-8-1 4-2 7-5 10z" fill="#e8401c"/><path d="M6 32c3 0 6 1 9 3-4 2-8 1-11-1z" fill="#6a9a3a"/><ellipse cx="27" cy="28" rx="4" ry="5.500" fill="#f0a62a"/><path d="M23.500 26l7 5M23.500 30l6-5M25 23l5 6" stroke="#d8862a" stroke-width="0.500"/><path d="M27 23c-2-3-3-5-3-8 2 2 3 4 3 6 0-3 1-5 2-7 1 3 0 6-1 8 1-2 3-3 4-4-1 3-2 5-5 5z" fill="#7db56a"/><g stroke="#d7ecd0" stroke-width="1.300" fill="none" stroke-linecap="round"><path d="M82 24c-4-4-8-5-12-4M82 24c-2-5-5-8-9-9M82 24c2-5 6-8 10-8M82 24c4-3 8-3 12-1M82 24c-5 0-8 2-10 5M82 24c4 2 6 5 7 8"/><path d="M82 24c1 4 2 8 2 12" stroke="#c9e0c0" stroke-width="1.100"/></g><g stroke="#6fae5a" stroke-width="0.500" fill="none"><path d="M82 24c-4-4-8-5-12-4M82 24c-2-5-5-8-9-9M82 24c2-5 6-8 10-8M82 24c4-3 8-3 12-1"/></g><g fill="none" stroke="#7a3e16" stroke-linecap="round"><path d="M7 42.500C21 30 36 26 50 26s32 6 49 17" stroke-width="2.700"/><path d="M5 42h97" stroke-width="2"/><path d="M14 39.300h74" stroke-width="0.900"/><path d="M22 41l4-8 4 8 5-11 5 11 5-13 5 13 5-13 5 13 5-12 5 12 5-10 5 10 4-7" stroke-width="0.800"/><path d="M4 44l8-4M102 44l-6-4" stroke-width="2.200"/></g><rect x="53" y="45.200" width="50.500" height="4.200" fill="#e8f0dc"/><text x="54.300" y="48.900" font-size="4.500" font-weight="700" font-family="Liberation Sans, sans-serif" fill="#1d7a34" stroke="#1d7a34" stroke-width="0.150" textLength="48" lengthAdjust="spacingAndGlyphs">GAD PARROQUIAL</text><text x="3" y="54.800" font-size="10.200" font-family="DejaVu Sans, Liberation Sans, sans-serif" fill="url(#vh)" textLength="99.500" lengthAdjust="spacingAndGlyphs" stroke="url(#vh)" stroke-width="0.200"><tspan font-size="12.400">V</tspan>alle <tspan font-size="12.400">H</tspan>ermoso</text></svg>
<svg style="left:603px;top:185px;" width="84" height="38" viewBox="0 0 84 38"><g transform="translate(11,2.2)" fill="#f0b428"><circle cx="2.800" cy="1.300" r="1.300"/><path d="M0.300 3h5v6.600H3.700V7.400a0.900 0.900 0 0 0-1.800 0v2.200H0.300z"/></g><g transform="translate(16.6,9.2)" fill="#1f5fb0"><circle cx="2.800" cy="1.300" r="1.300"/><path d="M0.300 3h5v6.600H3.700V7.400a0.900 0.900 0 0 0-1.800 0v2.200H0.300z"/></g><g transform="translate(11,15.6)" fill="#e03030"><circle cx="2.800" cy="1.300" r="1.300"/><path d="M0.300 3h5v6.600H3.700V7.400a0.900 0.900 0 0 0-1.800 0v2.200H0.300z"/></g><rect x="24.400" y="2" width="0.500" height="23.500" fill="#b0b0b0"/><text x="26" y="11.800" font-size="6.500" font-family="Liberation Sans, sans-serif" fill="#8a8a8a" textLength="21" lengthAdjust="spacingAndGlyphs">Ministerio</text><text x="26" y="18.400" font-size="6.500" font-family="Liberation Sans, sans-serif" fill="#8a8a8a" textLength="25.500" lengthAdjust="spacingAndGlyphs">de <tspan font-weight="700" fill="#444">Inclusión</tspan></text><text x="26" y="24.800" font-size="6.500" font-weight="700" font-family="Liberation Sans, sans-serif" fill="#444" textLength="44.800" lengthAdjust="spacingAndGlyphs">Económica y Social</text><path d="M2.200 29.900h64.300l-1.200 6.100H1z" fill="#f5c21a"/><text x="3.400" y="34.400" font-size="3.600" font-style="italic" font-weight="700" font-family="Liberation Sans, sans-serif" fill="#4a4020" textLength="60" lengthAdjust="spacingAndGlyphs">Construyendo juntos una vida de oportunidades</text><path d="M67.600 29.900h6.600l-1.300 6.100h-6.600z" fill="#1f5fb0"/><path d="M75.200 29.900h6.600l-1.300 6.100h-6.600z" fill="#e03030"/></svg>
<div style="left:165.2px;top:97.2px;width:167.5px;height:61.5px;background:#fff;border:1px solid #c8c8c8;box-shadow:0.500px 1px 2.500px rgba(0,0,0,0.280);z-index:5;"></div>
<div style="left:168.5px;top:139.3px;width:161px;height:1px;background:#e1e1e1;z-index:6;"></div>
<svg style="left:171.5px;top:144.3px;z-index:6;" width="10" height="10" viewBox="0 0 10 10"><circle cx="5" cy="5" r="4.600" fill="#1e6fb8"/><text x="2.900" y="7.600" font-size="7.200" font-weight="700" font-family="Liberation Sans, sans-serif" fill="#fff">?</text></svg>
<span style="font:400 7.6px/1 'Liberation Sans', sans-serif;color:#fff;top:7px;left:362px;letter-spacing:-0.445px;">ROL MES DEJUNIO 2023 MIES  -  Excel</span>
<span style="font:400 7.4px/1 'Liberation Sans', sans-serif;color:#217346;top:7px;left:506.5px;width:400px;text-align:center;">Inic. ses.</span>
<span style="font:400 7.6px/1 'Liberation Sans', sans-serif;color:#fff;top:27px;left:8px;letter-spacing:-0.047px;">Archivo</span>
<span style="font:400 7.6px/1 'Liberation Sans', sans-serif;color:#fff;top:27px;left:85px;letter-spacing:-0.219px;">Insertar</span>
<span style="font:400 7.6px/1 'Liberation Sans', sans-serif;color:#fff;top:27px;left:126px;letter-spacing:-0.110px;">Disposición de página</span>
<span style="font:400 7.6px/1 'Liberation Sans', sans-serif;color:#fff;top:27px;left:214px;letter-spacing:-0.082px;">Fórmulas</span>
<span style="font:400 7.6px/1 'Liberation Sans', sans-serif;color:#fff;top:27px;left:261px;letter-spacing:-0.169px;">Datos</span>
<span style="font:400 7.6px/1 'Liberation Sans', sans-serif;color:#fff;top:27px;left:297px;letter-spacing:-0.393px;">Revisar</span>
<span style="font:400 7.6px/1 'Liberation Sans', sans-serif;color:#fff;top:27px;left:336px;letter-spacing:0.050px;">Vista</span>
<span style="font:400 7.6px/1 'Liberation Sans', sans-serif;color:#fff;top:27px;left:368px;letter-spacing:0.119px;">Ayuda</span>
<span style="font:400 7.6px/1 'Liberation Sans', sans-serif;color:#fff;top:27px;left:424px;letter-spacing:-0.360px;">¿Qué desea hacer?</span>
<span style="font:400 7.6px/1 'Liberation Sans', sans-serif;color:#217346;top:27px;left:50px;letter-spacing:0.044px;">Inicio</span>
<span style="font:400 7.6px/1 'Liberation Sans', sans-serif;color:#333;top:67px;left:9px;letter-spacing:-0.353px;">Pegar</span>
<span style="font:400 7.4px/1 'Liberation Sans', sans-serif;color:#333;top:88px;left:3px;letter-spacing:-0.130px;">Portapapeles</span>
<span style="font:400 7.6px/1 'Liberation Sans', sans-serif;color:#222;top:50px;left:66.5px;letter-spacing:-0.252px;">Times New Roman</span>
<span style="font:400 7.6px/1 'Liberation Sans', sans-serif;color:#222;top:50px;left:144.5px;letter-spacing:-0.695px;">11</span>
<span style="font:400 9px/1 'Liberation Sans', sans-serif;color:#333;top:50px;left:173.5px;">A</span>
<span style="font:400 7.6px/1 'Liberation Sans', sans-serif;color:#333;top:51px;left:189px;">A</span>
<span style="font:700 7.8px/1 'Liberation Sans', sans-serif;color:#333;top:69px;left:68.5px;">N</span>
<span style="font:italic 700 7.8px/1 'Liberation Sans', sans-serif;color:#333;top:69px;left:83px;">K</span>
<span style="font:700 7.8px/1 'Liberation Sans', sans-serif;color:#333;top:69px;left:98.5px;text-decoration:underline;">S</span>
<span style="font:400 8.4px/1 'Liberation Sans', sans-serif;color:#333;top:68px;left:179px;">A</span>
<span style="font:400 7.4px/1 'Liberation Sans', sans-serif;color:#333;top:88px;left:115px;letter-spacing:-0.169px;">Fuente</span>
<span style="font:400 7.6px/1 'Liberation Sans', sans-serif;color:#222;top:50px;left:305px;letter-spacing:-0.094px;">Ajustar texto</span>
<span style="font:400 7.6px/1 'Liberation Sans', sans-serif;color:#222;top:69px;left:305px;letter-spacing:-0.088px;">Combinar y centrar</span>
<span style="font:400 7.4px/1 'Liberation Sans', sans-serif;color:#333;top:88px;left:273px;letter-spacing:-0.011px;">Alineación</span>
<span style="font:400 7.6px/1 'Liberation Sans', sans-serif;color:#222;top:50px;left:394.5px;letter-spacing:-0.060px;">Contabilidad</span>
<span style="font:400 10.5px/1 'Liberation Sans', sans-serif;color:#444;top:67px;left:396.5px;">$</span>
<span style="font:400 9.2px/1 'Liberation Sans', sans-serif;color:#444;top:69px;left:419.7px;letter-spacing:0.128px;">%</span>
<span style="font:400 5.8px/1 'Liberation Sans', sans-serif;color:#444;top:70px;left:433.7px;letter-spacing:-0.124px;">000</span>
<span style="font:400 7.4px/1 'Liberation Sans', sans-serif;color:#333;top:88px;left:418px;letter-spacing:-0.216px;">Número</span>
<span style="font:400 7.6px/1 'Liberation Sans', sans-serif;color:#333;top:67px;left:313.5px;width:400px;text-align:center;">Formato</span>
<span style="font:400 7.6px/1 'Liberation Sans', sans-serif;color:#333;top:77px;left:310.5px;width:400px;text-align:center;">condicional</span>
<span style="font:400 7.6px/1 'Liberation Sans', sans-serif;color:#333;top:67px;left:541.6px;letter-spacing:-0.063px;">Dar formato</span>
<span style="font:400 7.6px/1 'Liberation Sans', sans-serif;color:#333;top:77px;left:539px;letter-spacing:-0.046px;">como tabla</span>
<span style="font:400 7.6px/1 'Liberation Sans', sans-serif;color:#333;top:67px;left:585.8px;letter-spacing:-0.204px;">Estilos de</span>
<span style="font:400 7.6px/1 'Liberation Sans', sans-serif;color:#333;top:77px;left:589px;letter-spacing:-0.491px;">celda</span>
<span style="font:400 7.4px/1 'Liberation Sans', sans-serif;color:#333;top:88px;left:543px;letter-spacing:-0.112px;">Estilos</span>
<span style="font:400 7.6px/1 'Liberation Sans', sans-serif;color:#333;top:46px;left:641.9px;letter-spacing:-0.231px;">Insertar</span>
<span style="font:400 7.6px/1 'Liberation Sans', sans-serif;color:#333;top:60px;left:641.9px;letter-spacing:-0.117px;">Eliminar</span>
<span style="font:400 7.6px/1 'Liberation Sans', sans-serif;color:#333;top:74px;left:641.9px;letter-spacing:-0.112px;">Formato</span>
<span style="font:400 7.4px/1 'Liberation Sans', sans-serif;color:#333;top:88px;left:644.8px;letter-spacing:-0.419px;">Celdas</span>
<span style="font:400 12.5px/1 'Liberation Sans', sans-serif;color:#333;top:43px;left:694.8px;letter-spacing:1.666px;">Σ</span>
<span style="font:400 7.6px/1 'Liberation Sans', sans-serif;color:#333;top:67px;left:534px;width:400px;text-align:center;">Ordenar y</span>
<span style="font:400 7.6px/1 'Liberation Sans', sans-serif;color:#333;top:77px;left:530.5px;width:400px;text-align:center;">filtrar</span>
<span style="font:400 7.6px/1 'Liberation Sans', sans-serif;color:#333;top:67px;left:761px;letter-spacing:-0.318px;">Buscar y</span>
<span style="font:400 7.6px/1 'Liberation Sans', sans-serif;color:#333;top:77px;left:753px;letter-spacing:-0.193px;">seleccionar</span>
<span style="font:400 7.4px/1 'Liberation Sans', sans-serif;color:#333;top:88px;left:733px;letter-spacing:-0.321px;">Edición</span>
<span style="font:400 7.6px/1 'Liberation Sans', sans-serif;color:#222;top:108px;left:7.5px;letter-spacing:0.188px;">N15</span>
<span style="font:italic 700 9.5px/1 'Liberation Serif', serif;color:#555;top:107px;left:137.8px;">f</span>
<span style="font:italic 700 6.2px/1 'Liberation Serif', serif;color:#555;top:110px;left:141.3px;">x</span>
<span style="font:400 7.6px/1 'Liberation Sans', sans-serif;color:#333;top:108px;left:162.6px;">=</span>
<span style="font:400 7.2px/1 'Liberation Sans', sans-serif;color:#333;top:127px;left:-180.5px;width:400px;text-align:center;">B</span>
<span style="font:400 7.2px/1 'Liberation Sans', sans-serif;color:#333;top:127px;left:-134.0px;width:400px;text-align:center;">C</span>
<span style="font:400 7.2px/1 'Liberation Sans', sans-serif;color:#333;top:127px;left:-64.5px;width:400px;text-align:center;">D</span>
<span style="font:400 7.2px/1 'Liberation Sans', sans-serif;color:#333;top:127px;left:168.0px;width:400px;text-align:center;">J</span>
<span style="font:400 7.2px/1 'Liberation Sans', sans-serif;color:#333;top:127px;left:208.5px;width:400px;text-align:center;">K</span>
<span style="font:400 7.2px/1 'Liberation Sans', sans-serif;color:#333;top:127px;left:246.5px;width:400px;text-align:center;">L</span>
<span style="font:400 7.2px/1 'Liberation Sans', sans-serif;color:#217346;top:127px;left:281.25px;width:400px;text-align:center;">N</span>
<span style="font:400 7.2px/1 'Liberation Sans', sans-serif;color:#333;top:127px;left:315.0px;width:400px;text-align:center;">P</span>
<span style="font:400 7.2px/1 'Liberation Sans', sans-serif;color:#333;top:127px;left:347.75px;width:400px;text-align:center;">Q</span>
<span style="font:400 7.2px/1 'Liberation Sans', sans-serif;color:#333;top:127px;left:386.0px;width:400px;text-align:center;">R</span>
<span style="font:400 7.2px/1 'Liberation Sans', sans-serif;color:#333;top:127px;left:425.75px;width:400px;text-align:center;">S</span>
<span style="font:400 7.2px/1 'Liberation Sans', sans-serif;color:#333;top:127px;left:464.0px;width:400px;text-align:center;">T</span>
<span style="font:400 7.2px/1 'Liberation Sans', sans-serif;color:#333;top:127px;left:541.25px;width:400px;text-align:center;">U</span>
<span style="font:400 7.2px/1 'Liberation Sans', sans-serif;color:#333;top:127px;left:619.4px;width:400px;text-align:center;">V</span>
<span style="font:400 7.4px/1 'Liberation Sans', sans-serif;color:#3c3c3c;top:138px;left:-389.2px;width:400px;text-align:right;">1</span>
<span style="font:400 7.4px/1 'Liberation Sans', sans-serif;color:#3c3c3c;top:149px;left:-389.2px;width:400px;text-align:right;">2</span>
<span style="font:400 7.4px/1 'Liberation Sans', sans-serif;color:#3c3c3c;top:159px;left:-389.2px;width:400px;text-align:right;">3</span>
<span style="font:400 7.4px/1 'Liberation Sans', sans-serif;color:#3c3c3c;top:166px;left:-389.2px;width:400px;text-align:right;">4</span>
<span style="font:400 7.4px/1 'Liberation Sans', sans-serif;color:#3c3c3c;top:189px;left:-389.2px;width:400px;text-align:right;">5</span>
<span style="font:400 7.4px/1 'Liberation Sans', sans-serif;color:#3c3c3c;top:223px;left:-389.2px;width:400px;text-align:right;">6</span>
<span style="font:400 7.4px/1 'Liberation Sans', sans-serif;color:#3c3c3c;top:233px;left:-389.2px;width:400px;text-align:right;">7</span>
<span style="font:400 7.4px/1 'Liberation Sans', sans-serif;color:#3c3c3c;top:245px;left:-389.2px;width:400px;text-align:right;">8</span>
<span style="font:400 7.4px/1 'Liberation Sans', sans-serif;color:#3c3c3c;top:257px;left:-389.2px;width:400px;text-align:right;">9</span>
<span style="font:400 7.4px/1 'Liberation Sans', sans-serif;color:#3c3c3c;top:269px;left:-389.2px;width:400px;text-align:right;">10</span>
<span style="font:400 7.4px/1 'Liberation Sans', sans-serif;color:#3c3c3c;top:280px;left:-389.2px;width:400px;text-align:right;">11</span>
<span style="font:400 7.4px/1 'Liberation Sans', sans-serif;color:#3c3c3c;top:291px;left:-389.2px;width:400px;text-align:right;">12</span>
<span style="font:400 7.4px/1 'Liberation Sans', sans-serif;color:#3c3c3c;top:302px;left:-389.2px;width:400px;text-align:right;">13</span>
<span style="font:400 7.4px/1 'Liberation Sans', sans-serif;color:#3c3c3c;top:312px;left:-389.2px;width:400px;text-align:right;">14</span>
<span style="font:400 7.4px/1 'Liberation Sans', sans-serif;color:#217346;top:341px;left:-389.2px;width:400px;text-align:right;">15</span>
<span style="font:400 7.4px/1 'Liberation Sans', sans-serif;color:#3c3c3c;top:354px;left:-389.2px;width:400px;text-align:right;">16</span>
<span style="font:400 7.4px/1 'Liberation Sans', sans-serif;color:#3c3c3c;top:365px;left:-389.2px;width:400px;text-align:right;">17</span>
<span style="font:400 7.4px/1 'Liberation Sans', sans-serif;color:#3c3c3c;top:376px;left:-389.2px;width:400px;text-align:right;">18</span>
<span style="font:400 7.4px/1 'Liberation Sans', sans-serif;color:#3c3c3c;top:386px;left:-389.2px;width:400px;text-align:right;">19</span>
<span style="font:400 7.4px/1 'Liberation Sans', sans-serif;color:#3c3c3c;top:397px;left:-389.2px;width:400px;text-align:right;">20</span>
<span style="font:400 7.4px/1 'Liberation Sans', sans-serif;color:#3c3c3c;top:408px;left:-389.2px;width:400px;text-align:right;">21</span>
<span style="font:400 7.4px/1 'Liberation Sans', sans-serif;color:#3c3c3c;top:416px;left:-389.2px;width:400px;text-align:right;clip-path:inset(-2px -2px 3.4px -2px);">22</span>
<span style="font:700 10.2px/1 'Liberation Sans', sans-serif;color:#111;top:177px;left:181px;letter-spacing:0.154px;">GOBIERNO AUTONOMO DESCENTRALIZADO  PARROQUIAL RURAL</span>
<span style="font:700 10.2px/1 'Liberation Sans', sans-serif;color:#111;top:190px;left:279px;letter-spacing:0.047px;">“VALLE HERMOSO”</span>
<span style="font:700 7.3px/1 'Liberation Sans', sans-serif;color:#111;top:201px;left:189px;letter-spacing:0.299px;">Acuerdo Ministerial No. 1359 RUC: 1768120600001 Teléf.: 2773-220 / 2773-300</span>
<span style="font:700 7.3px/1 'Liberation Sans', sans-serif;color:#111;top:211px;left:119.5px;letter-spacing:0.299px;">Provincia Santo Domingo de los Tsáchilas, Cantón Santo Domingo de los Colorados, Parroquia Valle Hermoso</span>
<span style="font:700 8.8px/1 'Liberation Sans', sans-serif;color:#111;top:232px;left:33px;letter-spacing:0.001px;">CONVENIO DE COOPERACIÓN TÉCNICO ECONÓMICO ENTRE MIES IMPLEMENTACIÓN DE SERVICIOS DE PERSONAS CON DISCAPACIDAD</span>
<span style="font:700 7.6px/1 'Liberation Sans', sans-serif;color:#111;top:244px;left:279px;letter-spacing:0.505px;">N0.PD04-23D01-16231-D</span>
<span style="font:700 9.6px/1 'Liberation Sans', sans-serif;color:#111;top:267px;left:48px;letter-spacing:-0.151px;">Nombre de la Organización:</span>
<span style="font:700 9.6px/1 'Liberation Sans', sans-serif;color:#111;top:278px;left:49px;letter-spacing:-0.030px;">Mes y Año del justificativo:</span>
<span style="font:400 8.3px/1 'DejaVu Sans', 'Liberation Sans', sans-serif;color:#111;top:267px;left:209px;letter-spacing:-0.070px;">Gobierno Autónomo Descentralizado Parroquial Rural de Valle Hermoso</span>
<span style="font:400 8.3px/1 'DejaVu Sans', 'Liberation Sans', sans-serif;color:#111;top:278px;left:209px;letter-spacing:0.053px;">JUNIO 2023</span>
<span style="font:700 6.8px/1 'Liberation Sans', sans-serif;color:#111;top:364px;left:15px;letter-spacing:0.054px;">ELABORADO Y APROBADO POR:</span>
<span style="font:400 7.5px/1 'Liberation Sans', sans-serif;color:#111;top:406px;left:97.7px;letter-spacing:-0.167px;">Tlga. Ana Sosa Loor</span>
<span style="font:400 7.5px/1 'Liberation Sans', sans-serif;color:#111;top:406px;left:487px;letter-spacing:-0.114px;">Msc. Patricio Paredes Perrazo</span>
<span style="font:700 7.3px/1 'Liberation Sans', sans-serif;color:#111;top:416px;left:89.8px;letter-spacing:-0.286px;clip-path:inset(-2px -2px 3.3px -2px);">TESORERA GAD PR VM</span>
<span style="font:700 7.3px/1 'Liberation Sans', sans-serif;color:#111;top:416px;left:470px;letter-spacing:-0.201px;clip-path:inset(-2px -2px 3.3px -2px);">PRESIDENTE GAD PR VM</span>
<span style="font:700 6.1px/1 'DejaVu Sans','Liberation Sans',sans-serif;color:#111;top:307px;left:-180.5px;width:400px;text-align:center;">N</span>
<span style="font:700 6.1px/1 'DejaVu Sans','Liberation Sans',sans-serif;color:#111;top:303px;left:27.5px;">APELLIDOS Y</span>
<span style="font:700 6.1px/1 'DejaVu Sans','Liberation Sans',sans-serif;color:#111;top:310px;left:27.5px;">NOMBRES</span>
<span style="font:700 6.1px/1 'DejaVu Sans','Liberation Sans',sans-serif;color:#111;top:307px;left:109.5px;">CARGO</span>
<span style="font:700 6.1px/1 'DejaVu Sans','Liberation Sans',sans-serif;color:#111;top:303px;left:-14.5px;width:400px;text-align:center;">NÚMERO</span>
<span style="font:700 6.1px/1 'DejaVu Sans','Liberation Sans',sans-serif;color:#111;top:310px;left:-14.5px;width:400px;text-align:center;">DE CÉDULA</span>
<span style="font:700 6.1px/1 'DejaVu Sans','Liberation Sans',sans-serif;color:#111;top:303px;left:26.25px;width:400px;text-align:center;">SUELDO</span>
<span style="font:700 6.1px/1 'DejaVu Sans','Liberation Sans',sans-serif;color:#111;top:310px;left:26.25px;width:400px;text-align:center;">BÁSICO</span>
<span style="font:700 6.1px/1 'DejaVu Sans','Liberation Sans',sans-serif;color:#111;top:299px;left:64.25px;width:400px;text-align:center;">FONDOS</span>
<span style="font:700 6.1px/1 'DejaVu Sans','Liberation Sans',sans-serif;color:#111;top:307px;left:64.25px;width:400px;text-align:center;">DE</span>
<span style="font:700 6.1px/1 'DejaVu Sans','Liberation Sans',sans-serif;color:#111;top:315px;left:64.25px;width:400px;text-align:center;">RESERVA</span>
<span style="font:700 6.1px/1 'DejaVu Sans','Liberation Sans',sans-serif;color:#111;top:299px;left:99.5px;width:400px;text-align:center;">DÉCIMO</span>
<span style="font:700 6.1px/1 'DejaVu Sans','Liberation Sans',sans-serif;color:#111;top:307px;left:99.5px;width:400px;text-align:center;">TERCER</span>
<span style="font:700 6.1px/1 'DejaVu Sans','Liberation Sans',sans-serif;color:#111;top:315px;left:99.5px;width:400px;text-align:center;">O</span>
<span style="font:700 6.1px/1 'DejaVu Sans','Liberation Sans',sans-serif;color:#111;top:303px;left:132.0px;width:400px;text-align:center;">DÉCIMO</span>
<span style="font:700 6.1px/1 'DejaVu Sans','Liberation Sans',sans-serif;color:#111;top:310px;left:132.0px;width:400px;text-align:center;">CUARTO</span>
<span style="font:700 6.1px/1 'DejaVu Sans','Liberation Sans',sans-serif;color:#111;top:299px;left:168.25px;width:400px;text-align:center;">APORTE</span>
<span style="font:700 6.1px/1 'DejaVu Sans','Liberation Sans',sans-serif;color:#111;top:307px;left:168.25px;width:400px;text-align:center;">PATRONA</span>
<span style="font:700 6.1px/1 'DejaVu Sans Condensed','DejaVu Sans',sans-serif;color:#111;top:315px;left:168.25px;width:400px;text-align:center;letter-spacing:-0.092px;">L 11,65%</span>
<span style="font:700 6.1px/1 'DejaVu Sans','Liberation Sans',sans-serif;color:#111;top:303px;left:208.75px;width:400px;text-align:center;">TOTAL</span>
<span style="font:700 6.1px/1 'DejaVu Sans','Liberation Sans',sans-serif;color:#111;top:310px;left:208.75px;width:400px;text-align:center;">INGRESOS</span>
<span style="font:700 6.1px/1 'DejaVu Sans','Liberation Sans',sans-serif;color:#111;top:299px;left:246.5px;width:400px;text-align:center;">APORTE</span>
<span style="font:700 6.1px/1 'DejaVu Sans','Liberation Sans',sans-serif;color:#111;top:307px;left:246.5px;width:400px;text-align:center;">PERSON</span>
<span style="font:700 6.1px/1 'DejaVu Sans Condensed','DejaVu Sans',sans-serif;color:#111;top:315px;left:246.5px;width:400px;text-align:center;letter-spacing:-0.332px;">AL 11,45%</span>
<span style="font:700 6.1px/1 'DejaVu Sans','Liberation Sans',sans-serif;color:#111;top:303px;left:281.25px;width:400px;text-align:center;">PRESTA</span>
<span style="font:700 6.1px/1 'DejaVu Sans','Liberation Sans',sans-serif;color:#111;top:310px;left:281.25px;width:400px;text-align:center;">MO IESS</span>
<span style="font:700 6.1px/1 'DejaVu Sans','Liberation Sans',sans-serif;color:#111;top:299px;left:315.0px;width:400px;text-align:center;">DÉCIMO</span>
<span style="font:700 6.1px/1 'DejaVu Sans','Liberation Sans',sans-serif;color:#111;top:307px;left:315.0px;width:400px;text-align:center;">TERCER</span>
<span style="font:700 6.1px/1 'DejaVu Sans','Liberation Sans',sans-serif;color:#111;top:315px;left:315.0px;width:400px;text-align:center;">O</span>
<span style="font:700 6.1px/1 'DejaVu Sans','Liberation Sans',sans-serif;color:#111;top:303px;left:347.75px;width:400px;text-align:center;">DÉCIMO</span>
<span style="font:700 6.1px/1 'DejaVu Sans','Liberation Sans',sans-serif;color:#111;top:310px;left:347.75px;width:400px;text-align:center;">CUARTO</span>
<span style="font:700 6.1px/1 'DejaVu Sans','Liberation Sans',sans-serif;color:#111;top:299px;left:386.0px;width:400px;text-align:center;">APORTE</span>
<span style="font:700 6.1px/1 'DejaVu Sans','Liberation Sans',sans-serif;color:#111;top:307px;left:386.0px;width:400px;text-align:center;">PATRONAL</span>
<span style="font:700 6.1px/1 'DejaVu Sans Condensed','DejaVu Sans',sans-serif;color:#111;top:315px;left:386.0px;width:400px;text-align:center;letter-spacing:-0.557px;">11,65%</span>
<span style="font:700 6.1px/1 'DejaVu Sans','Liberation Sans',sans-serif;color:#111;top:299px;left:425.75px;width:400px;text-align:center;">TOTAL</span>
<span style="font:700 6.1px/1 'DejaVu Sans','Liberation Sans',sans-serif;color:#111;top:307px;left:425.75px;width:400px;text-align:center;">EGRESO</span>
<span style="font:700 6.1px/1 'DejaVu Sans','Liberation Sans',sans-serif;color:#111;top:315px;left:425.75px;width:400px;text-align:center;">S</span>
<span style="font:700 6.1px/1 'DejaVu Sans','Liberation Sans',sans-serif;color:#111;top:303px;left:464.0px;width:400px;text-align:center;">LIQUIDO A</span>
<span style="font:700 6.1px/1 'DejaVu Sans','Liberation Sans',sans-serif;color:#111;top:310px;left:464.0px;width:400px;text-align:center;">RECIBIR</span>
<span style="font:700 7.2px/1 'Liberation Serif', serif;color:#111;top:307px;left:541.25px;width:400px;text-align:center;">RECIBI CONFORME</span>
<span style="font:400 7.6px/1 'Liberation Serif', serif;color:#222;top:332px;left:-180.5px;width:400px;text-align:center;">1</span>
<span style="font:400 7.4px/1 'Liberation Serif', serif;color:#222;top:326px;left:27px;letter-spacing:0.187px;">LESLY MISHELL PATA</span>
<span style="font:400 7.4px/1 'Liberation Serif', serif;color:#222;top:337px;left:27px;letter-spacing:0.180px;">BANGUERA</span>
<span style="font:400 5.8px/1 'Liberation Sans', sans-serif;color:#222;top:333px;left:116.5px;letter-spacing:0.001px;">TÉCNICA PCD</span>
<span style="font:400 6.5px/1 'Liberation Sans', sans-serif;color:#222;top:332px;left:168px;letter-spacing:0.034px;">0803318435</span>
<span style="font:400 7.2px/1 'Liberation Serif', serif;color:#222;top:333px;left:212px;">$</span>
<span style="font:400 7.2px/1 'Liberation Serif', serif;color:#222;top:333px;left:-157.5px;width:400px;text-align:right;">733,00</span>
<span style="font:400 7.2px/1 'Liberation Serif', serif;color:#222;top:333px;left:250.5px;">$</span>
<span style="font:400 7.2px/1 'Liberation Serif', serif;color:#222;top:333px;left:-120px;width:400px;text-align:right;">61,06</span>
<span style="font:400 7.2px/1 'Liberation Serif', serif;color:#222;top:333px;left:288px;">$</span>
<span style="font:400 7.2px/1 'Liberation Serif', serif;color:#222;top:333px;left:-87px;width:400px;text-align:right;">61,08</span>
<span style="font:400 7.2px/1 'Liberation Serif', serif;color:#222;top:333px;left:321px;">$</span>
<span style="font:400 7.2px/1 'Liberation Serif', serif;color:#222;top:333px;left:-55px;width:400px;text-align:right;">33,33</span>
<span style="font:400 7.2px/1 'Liberation Serif', serif;color:#222;top:333px;left:353px;">$</span>
<span style="font:400 7.2px/1 'Liberation Serif', serif;color:#222;top:333px;left:-14.5px;width:400px;text-align:right;">85,39</span>
<span style="font:700 7.2px/1 'Liberation Serif', serif;color:#222;top:333px;left:393.5px;">$</span>
<span style="font:700 7.2px/1 'Liberation Serif', serif;color:#222;top:333px;left:26px;width:400px;text-align:right;">973,86</span>
<span style="font:400 7.2px/1 'Liberation Serif', serif;color:#222;top:333px;left:434px;">$</span>
<span style="font:400 7.2px/1 'Liberation Serif', serif;color:#222;top:333px;left:61px;width:400px;text-align:right;">83,93</span>
<span style="font:400 7.2px/1 'Liberation Serif', serif;color:#222;top:333px;left:469px;">$</span>
<span style="font:400 7.2px/1 'Liberation Serif', serif;color:#222;top:333px;left:95.5px;width:400px;text-align:right;">71,40</span>
<span style="font:400 7.2px/1 'Liberation Serif', serif;color:#222;top:333px;left:503.5px;">$</span>
<span style="font:400 7.2px/1 'Liberation Serif', serif;color:#222;top:333px;left:128.5px;width:400px;text-align:right;">61,08</span>
<span style="font:400 7.2px/1 'Liberation Serif', serif;color:#222;top:333px;left:536.5px;">$</span>
<span style="font:400 7.2px/1 'Liberation Serif', serif;color:#222;top:333px;left:161px;width:400px;text-align:right;">33,33</span>
<span style="font:400 7.2px/1 'Liberation Serif', serif;color:#222;top:333px;left:569px;">$</span>
<span style="font:400 7.2px/1 'Liberation Serif', serif;color:#222;top:333px;left:205px;width:400px;text-align:right;">85,39</span>
<span style="font:700 7.2px/1 'Liberation Serif', serif;color:#222;top:333px;left:613px;">$</span>
<span style="font:700 7.2px/1 'Liberation Serif', serif;color:#222;top:333px;left:240.5px;width:400px;text-align:right;">335,13</span>
<span style="font:700 9px/1 'Liberation Serif', serif;color:#222;top:331px;left:649px;">$ 638,73</span>
<span style="font:700 10.2px/1 'Liberation Serif', serif;color:#111;top:351px;left:609.5px;letter-spacing:-0.547px;">TOTAL</span>
<span style="font:700 9px/1 'Liberation Serif', serif;color:#222;top:352px;left:649px;">$ 638,73</span>
<span style="font:700 8.4px/1 'Liberation Sans', sans-serif;color:#217346;top:424px;left:69.5px;letter-spacing:-0.396px;">PCD</span>
<span style="font:400 7.4px/1 'Liberation Sans', sans-serif;color:#333;top:441px;left:4.5px;letter-spacing:-0.225px;">Listo</span>
<span style="font:400 7.4px/1 'Liberation Sans', sans-serif;color:#333;top:441px;left:43px;letter-spacing:-0.154px;">Accesibilidad: es necesario investigar</span>
<span style="font:400 7.2px/1 'Liberation Sans', sans-serif;color:#333;top:441px;left:828.5px;letter-spacing:-0.630px;">85%</span>
<span style="font:400 7.4px/1 'Liberation Sans', sans-serif;color:#fff;top:460px;left:757.3px;letter-spacing:-1.199px;">ESP</span>
<span style="font:400 7.6px/1 'Liberation Sans', sans-serif;color:#fff;top:454px;left:786px;letter-spacing:-0.443px;">16:30</span>
<span style="font:400 7.6px/1 'Liberation Sans', sans-serif;color:#fff;top:466px;left:778px;letter-spacing:-0.111px;">25/7/2023</span>
<span style="font:400 7.6px/1 'Liberation Sans', sans-serif;color:#444;top:103px;left:172px;letter-spacing:0.087px;z-index:6;-webkit-text-stroke:0.350px #444;">Color de relleno</span>
<span style="font:400 7.4px/1 'Liberation Sans', sans-serif;color:#555;top:118px;left:172px;letter-spacing:-0.056px;z-index:6;">Colorea el fondo de las celdas para que</span>
<span style="font:400 7.4px/1 'Liberation Sans', sans-serif;color:#555;top:128px;left:172px;letter-spacing:-0.058px;z-index:6;">destaquen.</span>
<span style="font:400 7.6px/1 'Liberation Sans', sans-serif;color:#1e5a9a;top:146px;left:186.5px;letter-spacing:0.119px;z-index:6;-webkit-text-stroke:0.350px #1e5a9a;">Más información</span>
</div></body></html>
